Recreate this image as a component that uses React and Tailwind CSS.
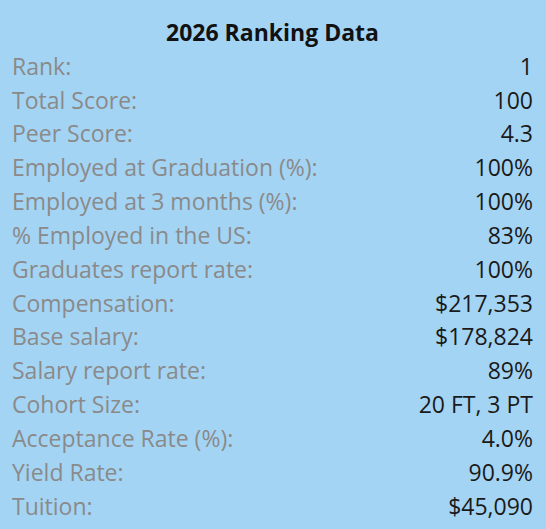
const rows = [
  ["Rank:", "1"],
  ["Total Score:", "100"],
  ["Peer Score:", "4.3"],
  ["Employed at Graduation (%):", "100%"],
  ["Employed at 3 months (%):", "100%"],
  ["% Employed in the US:", "83%"],
  ["Graduates report rate:", "100%"],
  ["Compensation:", "$217,353"],
  ["Base salary:", "$178,824"],
  ["Salary report rate:", "89%"],
  ["Cohort Size:", "20 FT, 3 PT"],
  ["Acceptance Rate (%):", "4.0%"],
  ["Yield Rate:", "90.9%"],
  ["Tuition:", "$45,090"],
];

export default function App() {
  return (
    <div
      className="h-[529px] w-[546px] bg-[#a4d4f4] pt-[15px] pl-3 pr-[13px]"
      style={{ fontFamily: '"Open Sans", "Noto Sans", sans-serif' }}
    >
      <h2 className="text-center text-[23px] font-bold leading-[34px] text-[#111]">
        2026 Ranking Data
      </h2>
      {rows.map(([label, value]) => (
        <div
          key={label}
          className="flex h-[33.85px] items-center justify-between text-[23px]"
        >
          <span className="text-[#8a8a8a]">{label}</span>
          <span className="text-[#1a1a1a]">{value}</span>
        </div>
      ))}
    </div>
  );
}
